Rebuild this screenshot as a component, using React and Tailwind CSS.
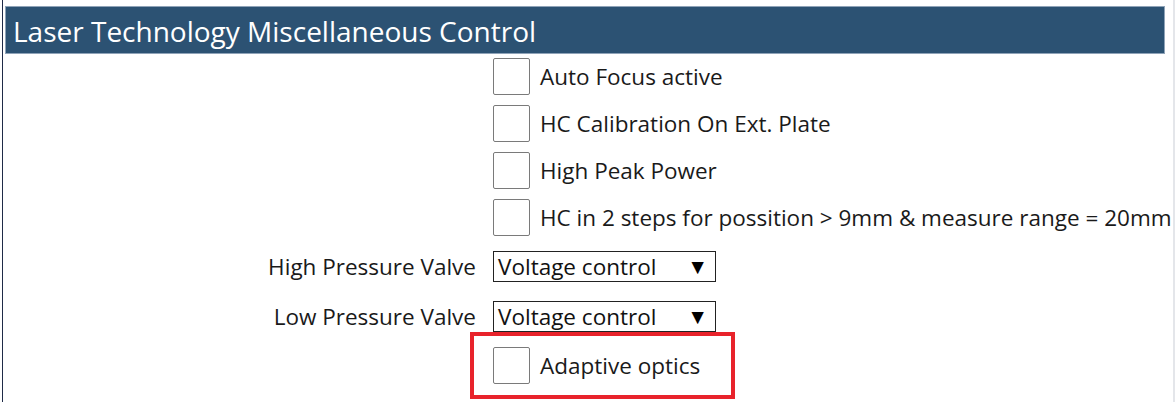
import React from "react";

const Check = ({ label }) => (
  <div className="flex items-center h-[37px]">
    <div className="w-[37px] h-[37px] border border-[#7a7a7a] rounded-[2px] bg-white shrink-0"></div>
    <span className="ml-[10px] pt-[2px] text-[22.5px] leading-none text-[#1a1a1a] whitespace-nowrap">{label}</span>
  </div>
);

const Select = () => (
  <div className="flex items-center justify-between w-[223px] h-[31px] border border-[#222] bg-white pl-[4px] pr-[7px]">
    <span className="pt-[2px] text-[22.5px] text-[#111] leading-none">Voltage control</span>
    <span className="text-[21px] text-black leading-none">▼</span>
  </div>
);

const App = () => {
  return (
    <div
      className="relative w-[1175px] h-[402px] bg-white overflow-hidden flex"
      style={{ fontFamily: '"Open Sans", "Noto Sans", sans-serif' }}
    >
      <div className="w-[2px] shrink-0"></div>
      <div className="w-[1px] shrink-0 bg-[#1f2b47]"></div>
      <div className="flex-1 flex flex-col pt-[6px] pl-[2px]">
        <div className="w-[1160px] h-[48px] bg-[#2c5273] border border-[#8fa3b8] flex items-center pl-[7px] pt-[2px]">
          <span className="text-[28px] text-white leading-none">
            Laser Technology Miscellaneous Control
          </span>
        </div>
        <div className="pl-[488px] pt-[4px] flex flex-col gap-[10px]">
          <Check label="Auto Focus active" />
          <Check label="HC Calibration On Ext. Plate" />
          <Check label="High Peak Power" />
          <Check label="HC in 2 steps for possition > 9mm & measure range = 20mm" />
        </div>
        <div className="flex items-center h-[31px] mt-[15px]">
          <span className="w-[471px] pt-[2px] text-right text-[22.5px] leading-none text-[#1a1a1a] whitespace-nowrap">High Pressure Valve</span>
          <div className="ml-[17px]"><Select /></div>
        </div>
        <div className="flex items-center h-[31px] mt-[19px]">
          <span className="w-[471px] pt-[2px] text-right text-[22.5px] leading-none text-[#1a1a1a] whitespace-nowrap">Low Pressure Valve</span>
          <div className="ml-[17px]"><Select /></div>
        </div>
        <div className="pl-[488px] mt-[15px]">
          <Check label="Adaptive optics" />
        </div>
      </div>
      <div className="w-[2px] shrink-0 bg-[#e4e6ea]"></div>
      <div className="absolute left-[470px] top-[332px] w-[265px] h-[67px] border-[4px] border-[#e8232b]"></div>
    </div>
  );
};

export default App;
